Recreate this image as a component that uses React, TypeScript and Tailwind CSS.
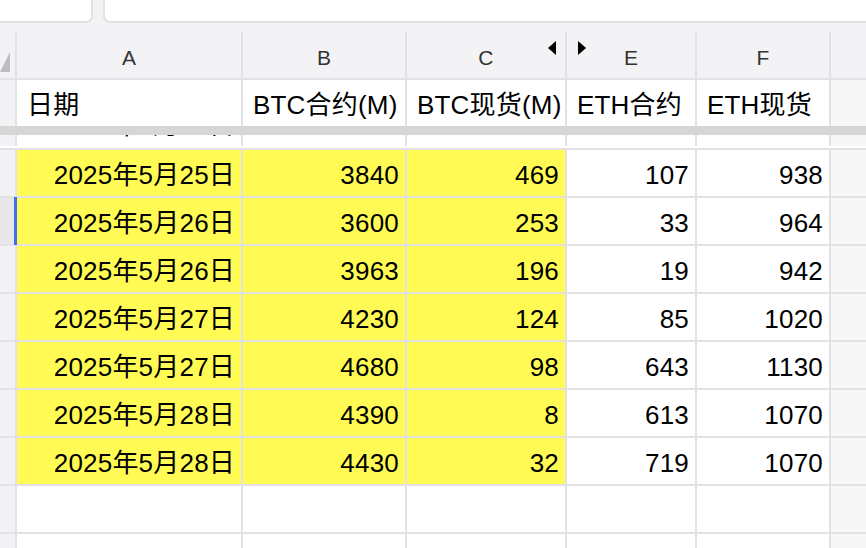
import type { ReactNode } from 'react'

const COLS = 'grid grid-cols-[15px_224px_162px_158px_128px_132px_1fr] gap-x-[2px]'

const rows: [string, number, number, number, number][] = [
  ['2025年5月25日', 3840, 469, 107, 938],
  ['2025年5月26日', 3600, 253, 33, 964],
  ['2025年5月26日', 3963, 196, 19, 942],
  ['2025年5月27日', 4230, 124, 85, 1020],
  ['2025年5月27日', 4680, 98, 643, 1130],
  ['2025年5月28日', 4390, 8, 613, 1070],
  ['2025年5月28日', 4430, 32, 719, 1070],
]

// une ligne de tableur : gouttière + colonnes A B C E F + reste
function Row({ children, className = '' }: { children: ReactNode; className?: string }) {
  return (
    <div className={`${COLS} h-[48px] border-b-2 border-[#e2e2e6] bg-[#e2e2e6] ${className}`}>
      {children}
    </div>
  )
}

function Cell({ children, yellow, left }: { children?: ReactNode; yellow?: boolean; left?: boolean }) {
  return (
    <div
      className={`flex items-center whitespace-nowrap pt-[4px] ${left ? 'justify-start pl-[10px]' : 'justify-end pr-[6px]'} ${
        yellow ? 'bg-[#fffb54]' : 'bg-white'
      }`}
    >
      {children}
    </div>
  )
}

function Gutter({ selected }: { selected?: boolean }) {
  return (
    <div className={`relative ${selected ? 'bg-[#e7e7eb]' : 'bg-[#f3f3f5]'}`}>
      {selected && <div className="absolute -top-[1px] -bottom-[1px] right-[-2px] w-[3px] bg-[#3a72f0]" />}
    </div>
  )
}

export default function App() {
  return (
    <div
      className="h-[548px] w-[866px] overflow-hidden bg-white text-[26px] leading-none tracking-[0.2px] text-black"
      style={{ fontFamily: '"Liberation Sans", "Noto Sans CJK SC", sans-serif' }}
    >
      {/* barre du haut : deux champs */}
      <div className="flex h-[32px] gap-[10px] bg-[#f3f3f5]">
        <div className="h-[23px] w-[93px] rounded-br-[7px] border-r-2 border-b-2 border-[#e2e2e6] bg-white" />
        <div className="h-[23px] flex-1 rounded-bl-[7px] border-l-2 border-b-2 border-[#e2e2e6] bg-white" />
      </div>

      {/* lettres de colonnes */}
      <div className={`${COLS} h-[48px] border-b-2 border-[#e2e2e6] bg-[#e2e2e6] text-[21px] text-[#333]`}>
        <div className="flex items-end bg-[#f3f3f5] pb-[6px]">
          <svg width="10" height="20" viewBox="0 0 10 20">
            <path d="M0 20 L10 0 L10 20 Z" fill="#bdbdc0" />
          </svg>
        </div>
        <div className="flex items-center justify-center bg-[#f3f3f5] pt-[4px]">A</div>
        <div className="flex items-center justify-center bg-[#f3f3f5] pt-[4px]">B</div>
        <div className="relative flex items-center justify-center bg-[#f3f3f5] pt-[4px]">
          C
          <svg className="absolute right-[9px] top-[9px]" width="8" height="14" viewBox="0 0 8 14">
            <path d="M8 0 L0 7 L8 14 Z" fill="#000" />
          </svg>
        </div>
        <div className="relative flex items-center justify-center bg-[#f3f3f5] pt-[4px]">
          E
          <svg className="absolute left-[11px] top-[9px]" width="8" height="14" viewBox="0 0 8 14">
            <path d="M0 0 L8 7 L0 14 Z" fill="#000" />
          </svg>
        </div>
        <div className="flex items-center justify-center bg-[#f3f3f5] pt-[4px]">F</div>
        <div className="bg-[#f3f3f5]" />
      </div>

      {/* ligne d'en-tête figée */}
      <div className={`${COLS} h-[46px] bg-[#e2e2e6]`}>
        <Gutter />
        <Cell left>日期</Cell>
        <Cell left>BTC合约(M)</Cell>
        <Cell left>BTC现货(M)</Cell>
        <Cell left>ETH合约</Cell>
        <Cell left>ETH现货</Cell>
        <div className="bg-[#f7f7f8]" />
      </div>
      <div className="h-[9px] bg-[#d6d6d6]" />

      {/* ligne partiellement masquée sous la barre de gel */}
      <div className="h-[15px] overflow-hidden border-b-2 border-[#e2e2e6]">
        <div className={`${COLS} -mt-[35px] h-[46px] bg-[#e2e2e6]`}>
          <Gutter />
          <Cell>2025年5月24日</Cell>
          <Cell>3650</Cell>
          <Cell>312</Cell>
          <Cell>71</Cell>
          <Cell>951</Cell>
          <div className="bg-[#f7f7f8]" />
        </div>
      </div>

      {rows.map(([date, btcF, btcS, ethF, ethS], i) => (
        <Row key={i}>
          <Gutter selected={i === 1} />
          <Cell yellow>{date}</Cell>
          <Cell yellow>{btcF}</Cell>
          <Cell yellow>{btcS}</Cell>
          <Cell>{ethF}</Cell>
          <Cell>{ethS}</Cell>
          <div className="bg-[#f7f7f8]" />
        </Row>
      ))}
      {[0, 1].map((i) => (
        <Row key={`empty-${i}`}>
          <Gutter />
          <Cell />
          <Cell />
          <Cell />
          <Cell />
          <Cell />
          <div className="bg-[#f7f7f8]" />
        </Row>
      ))}
    </div>
  )
}
